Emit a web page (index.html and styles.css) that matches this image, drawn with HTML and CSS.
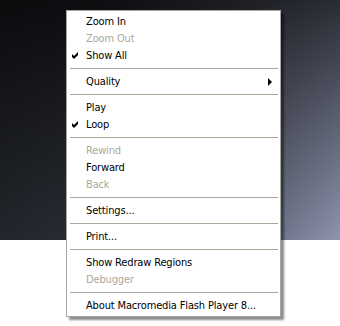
FILE: index.html
```html
<!DOCTYPE html>
<html>
<head>
	<meta charset="UTF-8">
	<title>flash menu</title>
	<link rel="stylesheet" href="styles.css">
</head>
<body>
	<div class="menu">
		<div class="item">Zoom In</div>
		<div class="item off">Zoom Out</div>
		<div class="item checked"><svg class="check" width="7" height="7" viewBox="0 0 7 7"><polygon points="0,2 2,4 6,0 6,3 2,7 0,5"/></svg>Show All</div>
		<div class="sep"></div>
		<div class="item sub">Quality<span class="arrow"></span></div>
		<div class="sep"></div>
		<div class="item">Play</div>
		<div class="item checked"><svg class="check" width="7" height="7" viewBox="0 0 7 7"><polygon points="0,2 2,4 6,0 6,3 2,7 0,5"/></svg>Loop</div>
		<div class="sep"></div>
		<div class="item off">Rewind</div>
		<div class="item">Forward</div>
		<div class="item off">Back</div>
		<div class="sep"></div>
		<div class="item">Settings...</div>
		<div class="sep"></div>
		<div class="item">Print...</div>
		<div class="sep"></div>
		<div class="item">Show Redraw Regions</div>
		<div class="item off">Debugger</div>
		<div class="sep"></div>
		<div class="item">About Macromedia Flash Player 8...</div>
	</div>
</body>
</html>
```

FILE: styles.css
```css
*{
	padding: 0;
	margin: 0;
}
body{
	width: 340px;
	height: 326px;
	overflow: hidden;
	background-color: #fff;
	background-image:
		linear-gradient(to bottom, rgba(0,0,0,0.7) 0%, rgba(0,0,0,0) 100%),
		linear-gradient(to right, #22252b 0%, #2b2e35 30%, #5c6171 70%, #8d94ae 100%);
	background-repeat: no-repeat;
	background-size: 340px 240px;
	padding-top: 10px;
	box-sizing: border-box;
}
.menu{
	width: 213px;
	margin-left: 66px;
	padding: 2px 0;
	background: #fff;
	border: 1px solid #a7a7a7;
	box-shadow: 3px 3px 2px rgba(0,0,0,0.45);
	font-family: "DejaVu Sans Condensed", "Liberation Sans", sans-serif;
	font-size: 11px;
	letter-spacing: -0.15px;
	color: #000;
}
.item{
	position: relative;
	height: 17px;
	line-height: 17px;
	padding-left: 19px;
	white-space: nowrap;
}
.off{
	color: #aca899;
}
.check{
	position: absolute;
	left: 5px;
	top: 5px;
	fill: #000;
}
.arrow{
	position: absolute;
	right: 8px;
	top: 5px;
	width: 0;
	height: 0;
	border-top: 4px solid transparent;
	border-bottom: 4px solid transparent;
	border-left: 4px solid #000;
}
.sep{
	height: 1px;
	margin: 4px 2px 4px 3px;
	background: #aca899;
}
```
